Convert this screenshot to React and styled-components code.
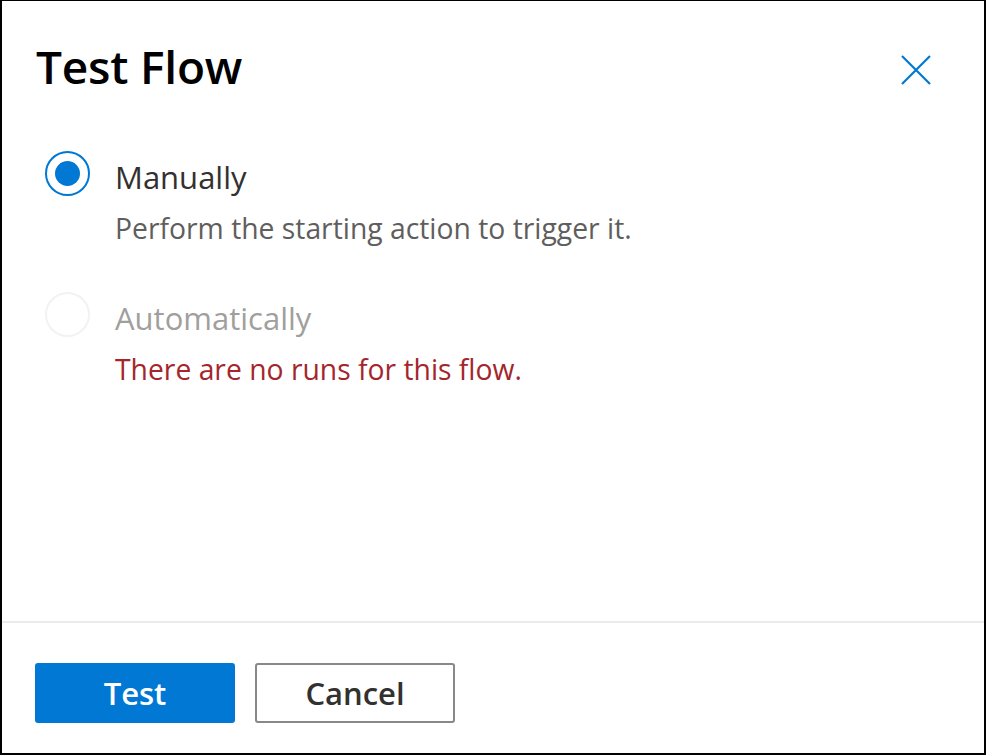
import React, { useState } from "react";
import styled, { createGlobalStyle } from "styled-components";

const GlobalStyle = createGlobalStyle`
  html, body {
    margin: 0;
    padding: 0;
    background: #ffffff;
  }
  body {
    font-family: "Open Sans", "Noto Sans", Arial, sans-serif;
  }
`;

const Dialog = styled.div`
  box-sizing: border-box;
  width: 986px;
  height: 755px;
  border: 2px solid #000;
  border-top-width: 1px;
  background: #fff;
  display: flex;
  flex-direction: column;
`;

const Header = styled.div`
  display: flex;
  justify-content: space-between;
  align-items: flex-start;
  padding: 37px 53px 0 34px;
`;

const Title = styled.h1`
  margin: 0;
  font-size: 46px;
  line-height: 57px;
  font-weight: 600;
  color: #000;
  letter-spacing: -0.2px;
`;

const CloseButton = styled.button`
  border: none;
  background: transparent;
  padding: 0;
  margin-top: 17px;
  width: 30px;
  height: 30px;
  cursor: pointer;
  color: #0078d4;
  svg {
    display: block;
  }
`;

const Body = styled.div`
  flex: 1;
  padding: 56px 0 0 43px;
  display: flex;
  flex-direction: column;
  gap: 46px;
`;

const Option = styled.label`
  display: grid;
  grid-template-columns: 45px 1fr;
  column-gap: 25px;
  cursor: ${p => (p.disabled ? "default" : "pointer")};
`;

const Circle = styled.span`
  box-sizing: border-box;
  width: 45px;
  height: 45px;
  border-radius: 50%;
  border: 2px solid ${p => (p.disabled ? "#f3f2f1" : "#0078d4")};
  display: flex;
  align-items: center;
  justify-content: center;

  &::after {
    content: "";
    width: 25px;
    height: 25px;
    border-radius: 50%;
    background: #0078d4;
    display: ${p => (p.checked ? "block" : "none")};
  }
`;

const OptionText = styled.div`
  display: flex;
  flex-direction: column;
  padding-top: 4px;
`;

const OptionLabel = styled.span`
  font-size: 31px;
  line-height: 44px;
  color: ${p => (p.disabled ? "#a19f9d" : "#323130")};
`;

const OptionNote = styled.span`
  font-size: 28.3px;
  line-height: 36px;
  margin-top: 11px;
  color: ${p => (p.error ? "#a4262c" : "#605e5c")};
`;

const Footer = styled.div`
  border-top: 2px solid #edebe9;
  padding: 40px 0 0 33px;
  height: 132px;
  box-sizing: border-box;
  display: flex;
  gap: 20px;
  align-items: flex-start;
`;

const Button = styled.button`
  box-sizing: border-box;
  width: 200px;
  height: 60px;
  border-radius: 3px;
  font-family: inherit;
  font-size: 31px;
  font-weight: 600;
  cursor: pointer;
  border: 2px solid ${p => (p.primary ? "#0078d4" : "#8a8886")};
  background: ${p => (p.primary ? "#0078d4" : "#fff")};
  color: ${p => (p.primary ? "#fff" : "#323130")};
`;

const CloseIcon = () => (
  <svg width="30" height="30" viewBox="0 0 30 30" fill="none">
    <path d="M1 1L29 29M29 1L1 29" stroke="currentColor" strokeWidth="2.2" />
  </svg>
);

export default function App() {
  const [mode] = useState("manual");

  return (
    <>
      <GlobalStyle />
      <Dialog>
        <Header>
          <Title>Test Flow</Title>
          <CloseButton aria-label="Close">
            <CloseIcon />
          </CloseButton>
        </Header>

        <Body>
          <Option>
            <Circle checked={mode === "manual"} />
            <OptionText>
              <OptionLabel>Manually</OptionLabel>
              <OptionNote>Perform the starting action to trigger it.</OptionNote>
            </OptionText>
          </Option>

          <Option disabled>
            <Circle disabled checked={mode === "auto"} />
            <OptionText>
              <OptionLabel disabled>Automatically</OptionLabel>
              <OptionNote error>There are no runs for this flow.</OptionNote>
            </OptionText>
          </Option>
        </Body>

        <Footer>
          <Button primary>Test</Button>
          <Button>Cancel</Button>
        </Footer>
      </Dialog>
    </>
  );
}
